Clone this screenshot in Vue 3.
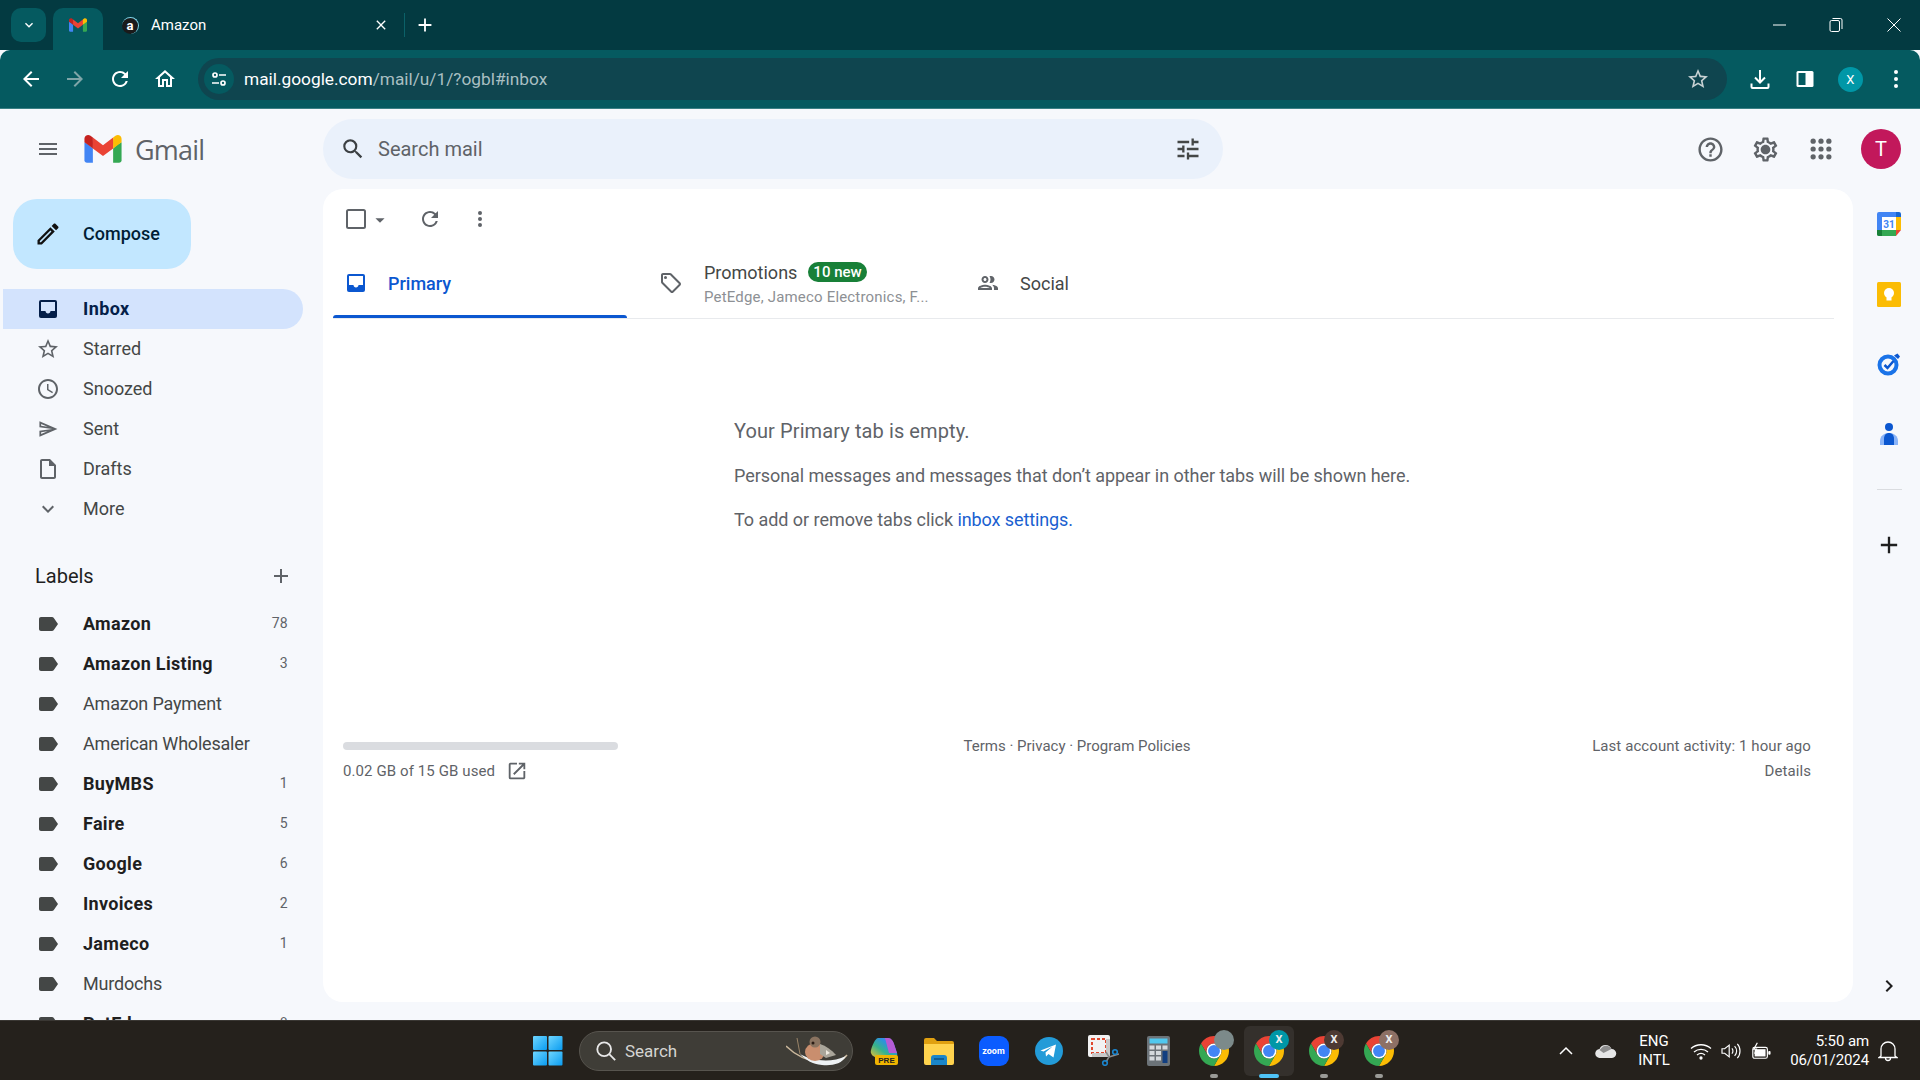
<template>
  <div class="screen">
    <!-- browser frame -->
    <div class="tabstrip">
      <button class="tab-list">
        <svg width="16" height="16" viewBox="0 0 24 24"><path fill="#fff" d="M16.59 8.59L12 13.17 7.41 8.59 6 10l6 6 6-6z" /></svg>
      </button>
      <div class="tab-pinned">
        <svg width="18" height="14" viewBox="0 0 256 193"><path v-for="p in gmailPaths" :key="p.d" :fill="p.fill" :d="p.d" /></svg>
      </div>
      <div class="tab-amazon">
        <span class="amazon-icon">a</span>
        <span class="tab-title">Amazon</span>
        <svg class="tab-close" width="16" height="16" viewBox="0 0 24 24"><path fill="#fff" d="M19 6.41L17.59 5 12 10.59 6.41 5 5 6.41 10.59 12 5 17.59 6.41 19 12 13.41 17.59 19 19 17.59 13.41 12z" /></svg>
      </div>
      <span class="tab-sep"></span>
      <svg class="tab-new" width="22" height="22" viewBox="0 0 24 24"><path fill="#fff" d="M19 13h-6v6h-2v-6H5v-2h6V5h2v6h6v2z" /></svg>
      <div class="win-controls">
        <span class="win-btn"><svg width="14" height="14" viewBox="0 0 14 14"><path stroke="#fff" d="M0 7h13" /></svg></span>
        <span class="win-btn"><svg width="14" height="14" viewBox="0 0 14 14" fill="none" stroke="#fff"><rect x="1" y="2.5" width="9.5" height="11" rx="1.5" /><path d="M3.5 .5h8a1.5 1.5 0 0 1 1.5 1.5v9" /></svg></span>
        <span class="win-btn win-close"><svg width="14" height="14" viewBox="0 0 14 14"><path stroke="#fff" d="M.5 .5l13 13M13.5 .5l-13 13" /></svg></span>
      </div>
    </div>

    <div class="toolbar">
      <span class="tool-btn"><svg width="24" height="24" viewBox="0 0 24 24"><path fill="#fff" d="M20 11H7.83l5.59-5.59L12 4l-8 8 8 8 1.41-1.41L7.83 13H20v-2z" /></svg></span>
      <span class="tool-btn"><svg width="24" height="24" viewBox="0 0 24 24"><path fill="#7fa5a8" d="M4 11h12.17l-5.59-5.59L12 4l8 8-8 8-1.41-1.41L16.17 13H4v-2z" /></svg></span>
      <span class="tool-btn reload-btn"><svg width="24" height="24" viewBox="0 0 24 24"><path fill="#fff" :d="icons.refresh" /></svg></span>
      <span class="tool-btn home-btn"><svg width="24" height="24" viewBox="0 0 24 24"><path fill="#fff" d="M12 5.69l5 4.5V18h-2v-6H9v6H7v-7.81l5-4.5M12 3L2 12h3v8h6v-6h2v6h6v-8h3L12 3z" /></svg></span>
      <div class="address">
        <span class="site-info">
          <svg width="18" height="18" viewBox="0 0 18 18" fill="none" stroke="#fff" stroke-width="1.7"><circle cx="5" cy="5" r="2" /><path d="M9 5h7M2 13h7" /><circle cx="13" cy="13" r="2" /></svg>
        </span>
        <span class="url"><span class="url-host">mail.google.com</span>/mail/u/1/?ogbl#inbox</span>
        <svg class="url-star" width="24" height="24" viewBox="0 0 24 24"><path fill="#c8d2d4" :d="icons.star" /></svg>
      </div>
      <span class="tool-btn first-action"><svg width="24" height="24" viewBox="0 0 24 24" fill="none" stroke="#fff" stroke-width="2"><path d="M12 3v12M7 10.5l5 5 5-5" /><path d="M3.5 16.5V20a1 1 0 0 0 1 1h15a1 1 0 0 0 1-1v-3.5" /></svg></span>
      <span class="tool-btn"><svg width="20" height="20" viewBox="0 0 20 20"><rect x="1.5" y="2" width="17" height="16" rx="1.5" fill="#fff" /><rect x="3.5" y="4" width="7" height="12" fill="#055a60" /></svg></span>
      <span class="tool-btn"><span class="profile">X</span></span>
      <span class="tool-btn"><svg width="20" height="24" viewBox="0 0 20 24" fill="#fff"><circle cx="10" cy="5" r="2" /><circle cx="10" cy="12" r="2" /><circle cx="10" cy="19" r="2" /></svg></span>
    </div>

    <!-- gmail -->
    <div class="page">
      <header class="gm-header">
        <div class="brand">
          <svg class="hamburger" width="24" height="24" viewBox="0 0 24 24"><path fill="#5f6368" d="M3 18h18v-2H3v2zm0-5h18v-2H3v2zm0-7v2h18V6H3z" /></svg>
          <svg width="38" height="28" viewBox="0 0 256 193"><path v-for="p in gmailPaths" :key="p.d" :fill="p.fill" :d="p.d" /></svg>
          <span class="gmail-word">Gmail</span>
        </div>
        <div class="search">
          <svg width="26" height="26" viewBox="0 0 24 24"><path fill="#3c4043" d="M15.5 14h-.79l-.28-.27A6.471 6.471 0 0 0 16 9.5 6.5 6.5 0 1 0 9.5 16c1.61 0 3.09-.59 4.23-1.57l.27.28v.79l5 4.99L20.49 19l-4.99-5zm-6 0C7.01 14 5 11.99 5 9.5S7.01 5 9.5 5 14 7.01 14 9.5 11.99 14 9.5 14z" /></svg>
          <span class="search-text">Search mail</span>
          <svg class="search-tune" width="28" height="28" viewBox="0 0 24 24"><path fill="#444746" d="M3 17v2h6v-2H3zM3 5v2h10V5H3zm10 16v-2h8v-2h-8v-2h-2v6h2zM7 9v2H3v2h4v2h2V9H7zm14 4v-2H11v2h10zm-6-4h2V7h4V5h-4V3h-2v6z" /></svg>
        </div>
        <div class="head-actions">
          <span class="head-btn"><svg width="29" height="29" viewBox="0 0 24 24"><path fill="#5f6368" d="M11 18h2v-2h-2v2zm1-16C6.48 2 2 6.48 2 12s4.48 10 10 10 10-4.48 10-10S17.52 2 12 2zm0 18c-4.41 0-8-3.59-8-8s3.59-8 8-8 8 3.59 8 8-3.59 8-8 8zm0-14c-2.21 0-4 1.79-4 4h2c0-1.1.9-2 2-2s2 .9 2 2c0 2-3 1.75-3 5h2c0-2.25 3-2.5 3-5 0-2.21-1.79-4-4-4z" /></svg></span>
          <span class="head-btn"><svg width="29" height="29" viewBox="0 0 24 24"><path fill="#5f6368" d="M19.43 12.98c.04-.32.07-.64.07-.98 0-.34-.03-.66-.07-.98l2.11-1.65c.19-.15.24-.42.12-.64l-2-3.46c-.09-.16-.26-.25-.44-.25-.06 0-.12.01-.17.03l-2.49 1c-.52-.4-1.08-.73-1.69-.98l-.38-2.65C14.46 2.18 14.25 2 14 2h-4c-.25 0-.46.18-.49.42l-.38 2.65c-.61.25-1.17.59-1.69.98l-2.49-1c-.06-.02-.12-.03-.18-.03-.17 0-.34.09-.43.25l-2 3.46c-.13.22-.07.49.12.64l2.11 1.65c-.04.32-.07.65-.07.98 0 .33.03.66.07.98l-2.11 1.65c-.19.15-.24.42-.12.64l2 3.46c.09.16.26.25.44.25.06 0 .12-.01.17-.03l2.49-1c.52.4 1.08.73 1.69.98l.38 2.65c.03.24.24.42.49.42h4c.25 0 .46-.18.49-.42l.38-2.65c.61-.25 1.17-.59 1.69-.98l2.49 1c.06.02.12.03.18.03.17 0 .34-.09.43-.25l2-3.46c.12-.22.07-.49-.12-.64l-2.11-1.65zm-1.98-1.71c.04.31.05.52.05.73 0 .21-.02.43-.05.73l-.14 1.13.89.7 1.08.84-.7 1.21-1.27-.51-1.04-.42-.9.68c-.43.32-.84.56-1.25.73l-1.06.43-.16 1.13-.2 1.35h-1.4l-.19-1.35-.16-1.13-1.06-.43c-.43-.18-.83-.41-1.23-.71l-.91-.7-1.06.43-1.27.51-.7-1.21 1.08-.84.89-.7-.14-1.13c-.03-.31-.05-.54-.05-.74s.02-.43.05-.73l.14-1.13-.89-.7-1.08-.84.7-1.21 1.27.51 1.04.42.9-.68c.43-.32.84-.56 1.25-.73l1.06-.43.16-1.13.2-1.35h1.39l.19 1.35.16 1.13 1.06.43c.43.18.83.41 1.23.71l.91.7 1.06-.43 1.27-.51.7 1.21-1.07.85-.89.7.14 1.13zM12 8c-2.21 0-4 1.79-4 4s1.79 4 4 4 4-1.79 4-4-1.79-4-4-4z" /></svg></span>
          <span class="head-btn"><svg width="22" height="22" viewBox="0 0 21 21" fill="#5f6368"><template v-for="y in [3, 10.5, 18]" :key="y"><circle v-for="x in [3, 10.5, 18]" :key="x" :cx="x" :cy="y" r="2.5" /></template></svg></span>
          <span class="avatar">T</span>
        </div>
      </header>

      <div class="gm-body">
        <aside class="sidebar">
          <button class="compose">
            <svg width="28" height="28" viewBox="0 0 24 24"><path fill="#111" d="M14.06 9.02l.92.92L5.92 19H5v-.92l9.06-9.06M17.66 3c-.25 0-.51.1-.7.29l-1.83 1.83 3.75 3.75 1.83-1.83a.996.996 0 0 0 0-1.41l-2.34-2.34c-.2-.2-.45-.29-.71-.29zm-3.6 3.19L3 17.25V21h3.75L17.81 9.94l-3.75-3.75z" /></svg>
            <span>Compose</span>
          </button>

          <nav class="nav">
            <div v-for="item in navItems" :key="item.name" class="nav-row" :class="{ active: item.active }">
              <svg v-if="item.active" width="24" height="24" viewBox="0 0 24 24"><rect x="3" y="3" width="18" height="18" rx="2" fill="#041e49" /><path fill="#d3e3fd" d="M5 5h14v9h-4.5c0 1.4-1.1 2.5-2.5 2.5s-2.5-1.1-2.5-2.5H5z" /></svg>
              <svg v-else width="24" height="24" :viewBox="item.box || '0 0 24 24'"><path fill="#5f6368" :d="item.icon" /><path v-if="item.icon2" fill="#5f6368" :d="item.icon2" /></svg>
              <span class="nav-name">{{ item.name }}</span>
            </div>
          </nav>

          <div class="labels-head">
            <span>Labels</span>
            <svg width="24" height="24" viewBox="0 0 24 24"><path fill="#5f6368" d="M19 13h-6v6h-2v-6H5v-2h6V5h2v6h6v2z" /></svg>
          </div>

          <div class="labels">
            <div v-for="label in labels" :key="label.name" class="nav-row label-row" :class="{ unread: label.count }">
              <svg width="24" height="24" viewBox="0 0 24 24"><path fill="#444746" :d="icons.label" /></svg>
              <span class="nav-name">{{ label.name }}</span>
              <span class="count">{{ label.count }}</span>
            </div>
          </div>
        </aside>

        <main class="card">
          <div class="mail-tools">
            <svg width="24" height="24" viewBox="0 0 24 24"><rect x="3" y="3" width="18" height="18" rx="1.5" fill="none" stroke="#5f6368" stroke-width="2" /></svg>
            <svg class="caret" width="22" height="22" viewBox="0 0 24 24"><path fill="#5f6368" d="M7 10l5 5 5-5z" /></svg>
            <svg class="tool-refresh" width="24" height="24" viewBox="0 0 24 24"><path fill="#5f6368" :d="icons.refresh" /></svg>
            <svg class="tool-more" width="24" height="24" viewBox="0 0 24 24" fill="#5f6368"><circle cx="12" cy="6" r="2" /><circle cx="12" cy="12" r="2" /><circle cx="12" cy="18" r="2" /></svg>
          </div>

          <div class="tabs">
            <div class="tab tab-primary">
              <svg width="24" height="24" viewBox="0 0 24 24"><rect x="3" y="3" width="18" height="18" rx="2" fill="#0b57d0" /><path fill="#fff" d="M5 5h14v9h-4.5c0 1.4-1.1 2.5-2.5 2.5s-2.5-1.1-2.5-2.5H5z" /></svg>
              <span>Primary</span>
            </div>
            <div class="tab tab-promos">
              <svg width="24" height="24" viewBox="0 0 24 24"><path fill="#5f6368" d="M21.41 11.58l-9-9C12.05 2.22 11.55 2 11 2H4c-1.1 0-2 .9-2 2v7c0 .55.22 1.05.59 1.42l9 9c.36.36.86.58 1.41.58.55 0 1.05-.22 1.41-.59l7-7c.37-.36.59-.86.59-1.41 0-.55-.23-1.06-.59-1.42zM13 20.01L4 11V4h7v-.01l9 9-7 7.02z" /><circle cx="6.5" cy="6.5" r="1.5" fill="#5f6368" /></svg>
              <div class="promo-text">
                <div class="promo-title">Promotions <span class="new-badge">10 new</span></div>
                <div class="promo-sub">PetEdge, Jameco Electronics, F...</div>
              </div>
            </div>
            <div class="tab tab-social">
              <svg width="24" height="24" viewBox="0 0 24 24"><path fill="#5f6368" d="M9 13.75c-2.34 0-7 1.17-7 3.5V19h14v-1.75c0-2.33-4.66-3.5-7-3.5zM4.34 17c.84-.58 2.87-1.25 4.66-1.25s3.82.67 4.66 1.25H4.34zM9 12c1.93 0 3.5-1.57 3.5-3.5S10.93 5 9 5 5.5 6.57 5.5 8.5 7.07 12 9 12zm0-5c.83 0 1.5.67 1.5 1.5S9.83 10 9 10s-1.5-.67-1.5-1.5S8.17 7 9 7zm7.04 6.81c1.16.84 1.96 1.96 1.96 3.44V19h4v-1.75c0-2.02-3.5-3.17-5.96-3.44zM15 12c1.93 0 3.5-1.57 3.5-3.5S16.93 5 15 5c-.54 0-1.04.13-1.5.35.63.89 1 1.98 1 3.15s-.37 2.26-1 3.15c.46.22.96.35 1.5.35z" /></svg>
              <span>Social</span>
            </div>
          </div>

          <div class="empty">
            <div class="empty-title">Your Primary tab is empty.</div>
            <p>Personal messages and messages that don’t appear in other tabs will be shown here.</p>
            <p>To add or remove tabs click <a class="link">inbox settings</a><span class="link">.</span></p>
          </div>

          <footer class="mail-foot">
            <div class="storage">
              <div class="storage-bar"></div>
              <div class="storage-text">
                0.02 GB of 15 GB used
                <svg width="22" height="22" viewBox="0 0 24 24"><path fill="#5f6368" d="M19 19H5V5h7V3H5a2 2 0 0 0-2 2v14a2 2 0 0 0 2 2h14c1.1 0 2-.9 2-2v-7h-2v7zM14 3v2h3.59l-9.83 9.83 1.41 1.41L19 6.41V10h2V3h-7z" /></svg>
              </div>
            </div>
            <div class="terms">Terms · Privacy · Program Policies</div>
            <div class="activity">
              <div>Last account activity: 1 hour ago</div>
              <div class="details">Details</div>
            </div>
          </footer>
        </main>

        <aside class="rail">
          <span class="rail-btn">
            <svg width="24" height="24" viewBox="0 0 24 24"><path fill="#4285f4" d="M2 0h17v5H5v14H0V2a2 2 0 0 1 2-2z" /><path fill="#fbbc04" d="M19 5h5v13h-5z" /><path fill="#34a853" d="M5 18h14v6H2a2 2 0 0 1-2-2v-4z" /><path fill="#188038" d="M0 18h5v6H2a2 2 0 0 1-2-2z" /><path fill="#ea4335" d="M19 18h5l-5 6z" /><path fill="#1967d2" d="M19 0h3a2 2 0 0 1 2 2v3h-5z" /><rect x="5" y="5" width="14" height="13" fill="#fff" /><text x="12" y="15.5" text-anchor="middle" class="cal-num">31</text></svg>
          </span>
          <span class="rail-btn">
            <svg width="24" height="25" viewBox="0 0 24 25"><rect width="24" height="25" rx="1.5" fill="#fbbc04" /><circle cx="12" cy="11" r="5" fill="#fff" /><rect x="9.5" y="15" width="5" height="3.5" fill="#fff" /></svg>
          </span>
          <span class="rail-btn">
            <svg width="24" height="24" viewBox="0 0 24 24"><circle cx="11" cy="13" r="8.5" fill="none" stroke="#1a73e8" stroke-width="4" /><path d="M7.5 13l3 3 6-7" fill="none" stroke="#0b57d0" stroke-width="2.5" /><path d="M17 3.5l4 3.5 2-2.5-2.5-3z" fill="#0b57d0" /></svg>
          </span>
          <span class="rail-btn">
            <svg width="18" height="22" viewBox="0 0 18 22"><circle cx="9" cy="4" r="4" fill="#0b57d0" /><path d="M0 22v-4c0-5 4-8 9-8s9 3 9 8v4z" fill="#8ab4f8" /><path d="M4 22v-6c0-4 2-6 5-6s5 2 5 6v6z" fill="#0b57d0" /></svg>
          </span>
          <div class="rail-sep"></div>
          <span class="rail-btn">
            <svg width="28" height="28" viewBox="0 0 24 24"><path fill="#1f1f1f" d="M19 13h-6v6h-2v-6H5v-2h6V5h2v6h6v2z" /></svg>
          </span>
          <svg class="rail-chevron" width="24" height="24" viewBox="0 0 24 24"><path fill="#1f1f1f" d="M8.59 16.59L13.17 12 8.59 7.41 10 6l6 6-6 6z" /></svg>
        </aside>
      </div>
    </div>

    <!-- windows taskbar -->
    <div class="taskbar">
      <span class="start">
        <svg width="30" height="30" viewBox="0 0 30 30">
          <defs><linearGradient id="winBlue" x1="0" y1="0" x2="1" y2="1"><stop offset="0" stop-color="#6fd6ff" /><stop offset="1" stop-color="#0a9cf0" /></linearGradient></defs>
          <rect x="0" y="0" width="14" height="14" rx="1" fill="url(#winBlue)" />
          <rect x="15.5" y="0" width="14" height="14" rx="1" fill="url(#winBlue)" />
          <rect x="0" y="15.5" width="14" height="14" rx="1" fill="url(#winBlue)" />
          <rect x="15.5" y="15.5" width="14" height="14" rx="1" fill="url(#winBlue)" />
        </svg>
      </span>
      <div class="task-search">
        <svg width="22" height="22" viewBox="0 0 24 24" fill="none" stroke="#e8e8e8" stroke-width="2"><circle cx="10" cy="10" r="7.5" /><path d="M15.5 15.5L22 22" /></svg>
        <span>Search</span>
        <svg class="bird" width="62" height="30" viewBox="0 0 62 30">
          <path d="M0 10c8 8 20 15 36 17 10 1 20-1 25-8" fill="none" stroke="#cbb89c" stroke-width="1.5" />
          <path d="M14 18c10 6 30 10 46 2-4 8-14 10-24 9-10-1-16-5-22-11z" fill="#eef2f4" />
          <path d="M11 2l3 16" stroke="#9a8468" stroke-width="1" />
          <ellipse cx="29" cy="16" rx="10" ry="9" fill="#c98e6e" />
          <circle cx="29" cy="6" r="5.5" fill="#8a7360" />
          <circle cx="27" cy="7" r="1.5" fill="#2b1c14" />
          <path d="M34 8c6 2 12 6 16 11l-10 3-6-4z" fill="#a9a59a" />
          <path d="M40 14l4 3-4 2z" fill="#f0ece2" />
        </svg>
      </div>

      <span class="app">
        <svg width="30" height="30" viewBox="0 0 30 30">
          <defs><linearGradient id="copilotG" x1="0" y1="1" x2="1" y2="0"><stop offset="0" stop-color="#f2c230" /><stop offset=".4" stop-color="#35b38c" /><stop offset=".7" stop-color="#2e8fe6" /><stop offset="1" stop-color="#d85fd0" /></linearGradient></defs>
          <path d="M9 2h10c3 0 5 3 6 6l3 9c1 3-1 5-4 5H12c-4 0-9-1-10-5-1-3 4-15 7-15z" fill="url(#copilotG)" />
          <path d="M16 2h3c3 0 5 3 6 6l3 9h-8z" fill="#b55cd6" />
          <rect x="6" y="19" width="23" height="10" rx="2" fill="#f0b400" />
          <text x="17.5" y="27" text-anchor="middle" class="pre-text">PRE</text>
        </svg>
      </span>
      <span class="app">
        <svg width="30" height="28" viewBox="0 0 30 28"><path d="M0 3a2 2 0 0 1 2-2h8l3 3h15a2 2 0 0 1 2 2v2H0z" fill="#e0a010" /><path d="M0 7h30v19a2 2 0 0 1-2 2H2a2 2 0 0 1-2-2z" fill="#ffd34e" /><path d="M7 28v-7a3 3 0 0 1 3-3h10a3 3 0 0 1 3 3v7z" fill="#1b86c9" /><path d="M10 22h10" stroke="#0c4f80" stroke-width="1.5" /></svg>
      </span>
      <span class="app"><span class="zoom-icon">zoom</span></span>
      <span class="app">
        <svg width="28" height="28" viewBox="0 0 28 28"><circle cx="14" cy="14" r="14" fill="#239bd8" /><path d="M5.5 13.5L21 7.5l-2.5 13-5-3.5-2.5 2.5-.5-4 7-6-9 5z" fill="#fff" /></svg>
      </span>
      <span class="app">
        <svg width="31" height="31" viewBox="0 0 31 31"><rect x="0" y="0" width="22" height="22" rx="2" fill="#f2f2f2" /><rect x="4" y="4" width="14" height="14" fill="none" stroke="#e0492f" stroke-width="2" stroke-dasharray="3 2" /><path d="M18 4h4v18H4v-4h14z" fill="#c9c9c9" /><path d="M18 17l3 5-3 5M31 19l-10 3" fill="none" stroke="#8a8a8a" stroke-width="1.5" /><circle cx="17" cy="28" r="2.3" fill="none" stroke="#1a86d0" stroke-width="1.6" /><circle cx="27" cy="17" r="2.3" fill="none" stroke="#1a86d0" stroke-width="1.6" /></svg>
      </span>
      <span class="app">
        <svg width="23" height="30" viewBox="0 0 23 30"><rect width="23" height="30" rx="2" fill="#6c7378" /><rect x="2.5" y="2.5" width="18" height="5" fill="#50c8ee" /><g fill="#d5dadd"><rect x="2.5" y="9.5" width="5" height="4" /><rect x="9" y="9.5" width="5" height="4" /><rect x="15.5" y="9.5" width="5" height="4" /><rect x="2.5" y="15" width="5" height="4" /><rect x="9" y="15" width="5" height="4" /><rect x="2.5" y="20.5" width="5" height="4" /><rect x="9" y="20.5" width="5" height="4" /></g><rect x="15.5" y="15" width="5" height="12" fill="#123f80" /></svg>
      </span>
      <span v-for="win in chromeWindows" :key="win.id" class="app chrome-app" :class="{ current: win.current }">
        <svg width="30" height="30" viewBox="0 0 48 48">
          <path fill="#ea4335" d="M24 0C15.1 0 7.4 4.8 3.2 12l10.4 18A12 12 0 0 1 24 12h20.8C40.6 4.8 32.9 0 24 0z" />
          <path fill="#fbbc04" d="M44.8 12H24a12 12 0 0 1 10.4 18L24 48c13.3 0 24-10.7 24-24 0-4.4-1.2-8.5-3.2-12z" />
          <path fill="#34a853" d="M3.2 12C1.2 15.5 0 19.6 0 24c0 13.3 10.7 24 24 24l10.4-18A12 12 0 0 1 13.6 30L3.2 12z" />
          <circle cx="24" cy="24" r="12" fill="#fff" />
          <circle cx="24" cy="24" r="9.5" fill="#4285f4" />
        </svg>
        <span class="win-badge" :class="win.badge">{{ win.letter }}</span>
        <span class="win-pill"></span>
      </span>

      <div class="tray">
        <span class="tray-item tray-caret"><svg width="16" height="16" viewBox="0 0 16 16" fill="none" stroke="#fff" stroke-width="1.5"><path d="M2 11l6-6 6 6" /></svg></span>
        <span class="tray-item tray-cloud"><svg width="22" height="14" viewBox="0 0 22 14"><path d="M5 14a4.5 4.5 0 0 1-.5-9A6.5 6.5 0 0 1 16.5 5 4.5 4.5 0 0 1 17 14z" fill="#e6e6e6" /><path d="M8 2.5A6.5 6.5 0 0 1 16.5 5l-8 4-4-3z" fill="#8e8e8e" /></svg></span>
        <span class="tray-lang">ENG<br />INTL</span>
        <span class="tray-item tray-wifi"><svg width="22" height="18" viewBox="0 0 22 18" fill="none" stroke="#fff" stroke-width="1.3"><path d="M1 6.5c5.5-5 14.5-5 20 0M4 10c4-3.5 10-3.5 14 0M7 13c2.3-1.8 5.7-1.8 8 0" /><circle cx="11" cy="16" r="1" fill="#fff" /></svg></span>
        <span class="tray-item"><svg width="20" height="18" viewBox="0 0 22 20" fill="none" stroke="#fff" stroke-width="1.3"><path d="M1 7.5h3l5-4v13l-5-4H1z" /><path d="M12 7c1.5 1.5 1.5 4.5 0 6M15 4.500c3 3 3 8 0 11M18 2c4 4 4 12 0 16" /></svg></span>
        <span class="tray-item"><svg width="20" height="18" viewBox="0 0 22 18"><rect x="2" y="5" width="16" height="12" rx="2" fill="none" stroke="#fff" stroke-width="1.3" /><rect x="4" y="7" width="12" height="8" fill="#fff" /><rect x="19" y="9" width="2.5" height="4" rx="1" fill="#fff" /><path d="M7 0L3 7h3l-2 5" fill="none" stroke="#fff" stroke-width="1.3" /></svg></span>
        <span class="tray-clock"><span>5:50 am</span><span>06/01/2024</span></span>
        <span class="tray-item tray-bell"><svg width="20" height="22" viewBox="0 0 20 22" fill="none" stroke="#fff" stroke-width="1.3"><path d="M3 16V9a7 7 0 0 1 14 0v7l2 1.5H1zM7.5 18a2.5 2.5 0 0 0 5 0" /></svg></span>
      </div>
    </div>
  </div>
</template>

<script setup>
const icons = {
  refresh: 'M17.65 6.35A7.958 7.958 0 0 0 12 4c-4.42 0-7.99 3.58-7.99 8s3.57 8 7.99 8c3.73 0 6.84-2.55 7.73-6h-2.08A5.99 5.99 0 0 1 12 18c-3.31 0-6-2.69-6-6s2.69-6 6-6c1.66 0 3.14.69 4.22 1.78L13 11h7V4l-2.35 2.35z',
  star: 'M22 9.24l-7.19-.62L12 2 9.19 8.63 2 9.24l5.46 4.73L5.82 21 12 17.27 18.18 21l-1.63-7.03L22 9.24zM12 15.4l-3.76 2.27 1-4.28-3.32-2.88 4.38-.38L12 6.1l1.71 4.04 4.38.38-3.32 2.88 1 4.28L12 15.4z',
  label: 'M17.63 5.84C17.27 5.33 16.67 5 16 5L5 5.01C3.9 5.01 3 5.9 3 7v10c0 1.1.9 1.99 2 1.99L16 19c.67 0 1.27-.33 1.63-.84L22 12l-4.37-6.16z',
}

const gmailPaths = [
  { fill: '#4285f4', d: 'M58.182 192.05V93.14L27.507 65.077 0 49.504v125.091c0 9.658 7.825 17.455 17.455 17.455h40.727Z' },
  { fill: '#34a853', d: 'M197.818 192.05h40.727c9.659 0 17.455-7.826 17.455-17.455V49.505l-31.156 17.837-27.026 25.798v98.91Z' },
  { fill: '#ea4335', d: 'm58.182 93.14-4.174-38.647 4.174-36.989L128 69.868l69.818-52.364 4.669 34.992-4.669 40.644L128 145.504z' },
  { fill: '#fbbc04', d: 'M197.818 17.504V93.14L256 49.504V26.231c0-21.585-24.64-33.89-41.89-20.945l-16.292 12.218Z' },
  { fill: '#c5221f', d: 'm0 49.504 26.759 20.07L58.182 93.14V17.504L41.89 5.286C24.61-7.66 0 4.646 0 26.23v23.273Z' },
]

const navItems = [
  { name: 'Inbox', active: true },
  { name: 'Starred', icon: icons.star },
  {
    name: 'Snoozed',
    icon: 'M11.99 2C6.47 2 2 6.48 2 12s4.47 10 9.99 10C17.52 22 22 17.52 22 12S17.52 2 11.99 2zM12 20c-4.42 0-8-3.58-8-8s3.58-8 8-8 8 3.58 8 8-3.58 8-8 8z',
    icon2: 'M12.5 7H11v6l5.25 3.15.75-1.23-4.5-2.67z',
  },
  { name: 'Sent', box: '-2 -2 28 28', icon: 'M4.01 6.03l7.51 3.22-7.52-1 .01-2.22m7.5 8.72L4 17.97v-2.22l7.51-1M2.01 3L2 10l15 2-15 2 .01 7L23 12 2.01 3z' },
  { name: 'Drafts', icon: 'M14 2H6c-1.1 0-1.99.9-1.99 2L4 20c0 1.1.89 2 1.99 2H18c1.1 0 2-.9 2-2V8l-6-6zM6 20V4h7v5h5v11H6z' },
  { name: 'More', icon: 'M16.59 8.59L12 13.17 7.41 8.59 6 10l6 6 6-6z' },
]

const labels = [
  { name: 'Amazon', count: 78 },
  { name: 'Amazon Listing', count: 3 },
  { name: 'Amazon Payment' },
  { name: 'American Wholesaler' },
  { name: 'BuyMBS', count: 1 },
  { name: 'Faire', count: 5 },
  { name: 'Google', count: 6 },
  { name: 'Invoices', count: 2 },
  { name: 'Jameco', count: 1 },
  { name: 'Murdochs' },
  { name: 'PetEdge', count: 8 },
]

const chromeWindows = [
  { id: 1, letter: '', badge: 'badge-photo' },
  { id: 2, letter: 'X', badge: 'badge-teal', current: true },
  { id: 3, letter: 'X', badge: 'badge-brown' },
  { id: 4, letter: 'X', badge: 'badge-tan' },
]
</script>

<style>
html,
body {
  margin: 0;
  overflow: hidden;
}
</style>

<style scoped>
.screen {
  width: 1920px;
  height: 1080px;
  display: flex;
  flex-direction: column;
  overflow: hidden;
  font-family: Roboto, "Noto Sans", sans-serif;
  background: #f6f8fc;
}
svg {
  display: block;
  flex-shrink: 0;
}
button {
  border: 0;
  padding: 0;
  font-family: inherit;
}

/* tab strip */
.tabstrip {
  height: 50px;
  flex-shrink: 0;
  display: flex;
  align-items: flex-start;
  background: #033a41;
  color: #fff;
}
.tab-list {
  width: 35px;
  height: 34px;
  margin: 8px 0 0 11px;
  border-radius: 10px;
  background: #055a60;
  display: flex;
  align-items: center;
  justify-content: center;
}
.tab-pinned {
  width: 50px;
  height: 42px;
  margin: 8px 0 0 7px;
  border-radius: 10px 10px 0 0;
  background: #055a60;
  display: flex;
  align-items: center;
  justify-content: center;
  padding-bottom: 8px;
  box-sizing: border-box;
}
.tab-amazon {
  width: 291px;
  height: 34px;
  margin-top: 8px;
  padding: 0 5px 0 19px;
  box-sizing: border-box;
  display: flex;
  align-items: center;
  font-size: 15px;
}
.amazon-icon {
  width: 17px;
  height: 17px;
  border-radius: 50%;
  background: #1a1a1a;
  border-top: 1px solid #7fd3e8;
  border-right: 1px solid #7fd3e8;
  color: #fff;
  font-size: 13px;
  font-weight: 700;
  line-height: 15px;
  text-align: center;
  box-sizing: border-box;
}
.tab-title {
  margin-left: 12px;
}
.tab-close {
  margin-left: auto;
}
.tab-sep {
  width: 1px;
  height: 24px;
  margin: 13px 0 0 10px;
  background: #0b6168;
}
.tab-new {
  margin: 14px 0 0 9px;
}
.win-controls {
  margin-left: auto;
  display: flex;
}
.win-btn {
  width: 56px;
  height: 50px;
  display: flex;
  align-items: center;
  justify-content: center;
}
.win-close {
  width: 52px;
  margin-left: 4px;
}

/* toolbar */
.toolbar {
  height: 58px;
  flex-shrink: 0;
  display: flex;
  align-items: center;
  padding-left: 9px;
  background: #055a60;
  border-bottom: 1px solid #3a8085;
  border-radius: 10px 10px 0 0;
}
.tool-btn {
  width: 44px;
  height: 44px;
  display: flex;
  align-items: center;
  justify-content: center;
}
.reload-btn {
  width: 45px;
}
.home-btn {
  margin-left: 1px;
}
.first-action {
  margin-left: 11px;
}
.first-action ~ .tool-btn {
  width: 45.5px;
}
.address {
  width: 1529px;
  height: 42px;
  margin-left: 11px;
  border-radius: 21px;
  background: #0f454f;
  display: flex;
  align-items: center;
  padding: 0 17px 0 6px;
  box-sizing: border-box;
}
.site-info {
  width: 30px;
  height: 30px;
  border-radius: 50%;
  background: #055a60;
  display: flex;
  align-items: center;
  justify-content: center;
}
.url {
  margin-left: 10px;
  font-size: 17.3px;
  color: #a9bfc2;
}
.url-host {
  color: #fff;
}
.url-star {
  margin-left: auto;
}
.profile {
  width: 25px;
  height: 25px;
  border-radius: 50%;
  background: #0097a7;
  color: #fff;
  font-size: 13px;
  line-height: 25px;
  text-align: center;
}

/* gmail header */
.page {
  flex: 1;
  min-height: 0;
  display: flex;
  flex-direction: column;
}
.gm-header {
  height: 80px;
  flex-shrink: 0;
  display: flex;
  align-items: flex-start;
  padding-top: 10px;
  box-sizing: border-box;
}
.brand {
  width: 323px;
  height: 60px;
  flex-shrink: 0;
  display: flex;
  align-items: center;
}
.hamburger {
  margin: 0 24px 0 36px;
}
.gmail-word {
  margin-left: 13px;
  font-family: "Open Sans", sans-serif;
  font-size: 27px;
  letter-spacing: -0.8px;
  color: #5f6368;
}
.search {
  width: 900px;
  height: 60px;
  border-radius: 30px;
  background: #eaf1fb;
  display: flex;
  align-items: center;
  padding: 0 21px 0 17px;
  box-sizing: border-box;
}
.search-text {
  margin-left: 12px;
  font-size: 20px;
  color: #5f6368;
}
.search-tune {
  margin-left: auto;
}
.head-actions {
  margin-left: auto;
  height: 60px;
  padding-right: 19px;
  display: flex;
  align-items: center;
}
.head-btn {
  width: 55px;
  display: flex;
  justify-content: center;
}
.avatar {
  width: 40px;
  height: 40px;
  margin-left: 13px;
  border-radius: 50%;
  background: #c2185b;
  color: #fff;
  font-size: 20px;
  line-height: 40px;
  text-align: center;
}

/* sidebar */
.gm-body {
  flex: 1;
  min-height: 0;
  display: flex;
}
.sidebar {
  width: 323px;
  flex-shrink: 0;
  overflow: hidden;
}
.compose {
  width: 178px;
  height: 70px;
  margin: 10px 0 0 13px;
  border-radius: 24px;
  background: #c2e7ff;
  display: flex;
  align-items: center;
  padding-left: 21px;
  box-sizing: border-box;
  color: #001d35;
  font-size: 18px;
  font-weight: 500;
}
.compose span {
  margin: -1px 0 0 21px;
}
.nav {
  margin-top: 20px;
}
.nav .nav-name {
  margin-top: -1px;
}
.nav-row {
  width: 300px;
  height: 40px;
  margin-left: 3px;
  padding: 0 15px 0 33px;
  box-sizing: border-box;
  display: flex;
  align-items: center;
  font-size: 18px;
  color: #444746;
}
.nav-row.active {
  background: #d3e3fd;
  border-radius: 0 20px 20px 0;
  color: #041e49;
  font-weight: 700;
  letter-spacing: 0.4px;
}
.nav-name {
  margin-left: 23px;
}
.labels-head {
  width: 300px;
  height: 40px;
  margin: 27px 0 0 35px;
  padding-right: 42px;
  box-sizing: border-box;
  display: flex;
  align-items: center;
  justify-content: space-between;
  font-size: 20px;
  color: #1f1f1f;
}
.labels {
  margin-top: 7px;
}
.label-row {
  letter-spacing: -0.2px;
}
.label-row svg {
  margin-top: 1px;
}
.label-row.unread {
  font-weight: 700;
  color: #1f1f1f;
  letter-spacing: 0.3px;
}
.count {
  margin-left: auto;
  font-size: 14px;
  font-weight: 400;
  color: #5f6368;
}

/* main card */
.card {
  width: 1530px;
  flex-shrink: 0;
  margin-bottom: 18px;
  border-radius: 20px;
  background: #fff;
  display: flex;
  flex-direction: column;
  color: #5f6368;
}
.mail-tools {
  height: 71px;
  flex-shrink: 0;
  padding: 18px 0 0 21px;
  box-sizing: border-box;
  display: flex;
  align-items: flex-start;
}
.caret {
  margin: 2px 0 0 1px;
}
.tool-refresh {
  margin-left: 27px;
}
.tool-more {
  margin-left: 26px;
}
.tabs {
  height: 59px;
  flex-shrink: 0;
  margin: 0 19px 0 10px;
  border-bottom: 1px solid #e8eaed;
  box-sizing: border-box;
  display: flex;
}
.tab {
  position: relative;
  display: flex;
  align-items: center;
  padding-bottom: 12px;
  font-size: 18px;
  color: #444746;
  box-sizing: border-box;
}
.tab-primary {
  width: 294px;
  padding-left: 11px;
  gap: 20px;
  color: #0b57d0;
  font-weight: 500;
}
.tab-primary::after {
  content: "";
  position: absolute;
  left: 0;
  right: 0;
  bottom: 0;
  height: 3px;
  border-radius: 3px 3px 0 0;
  background: #0b57d0;
}
.tab-promos {
  width: 317px;
  padding-left: 32px;
  gap: 21px;
}
.tab-social {
  padding-left: 32px;
  gap: 20px;
}
.promo-title {
  display: flex;
  align-items: center;
  gap: 11px;
  height: 26px;
}
.new-badge {
  height: 20px;
  padding: 0 5px;
  border-radius: 10px;
  background: #188038;
  color: #fff;
  font-size: 15px;
  font-weight: 500;
  line-height: 20px;
}
.promo-sub {
  margin-top: 2px;
  font-size: 15px;
  line-height: 20px;
  letter-spacing: 0.18px;
  color: #8d9094;
}

.empty {
  margin: 98px 0 0 411px;
  color: #5f6368;
}
.empty-title {
  font-size: 20px;
  line-height: 28px;
  letter-spacing: 0.1px;
}
.empty p {
  margin: 18px 0 0;
  font-size: 18px;
  line-height: 26px;
  letter-spacing: -0.045px;
}
.link {
  color: #1a5fd0;
  letter-spacing: -0.1px;
}
.mail-foot {
  margin-top: 203px;
  padding: 0 42px 0 20px;
  display: grid;
  grid-template-columns: 1fr auto 1fr;
  font-size: 15px;
  line-height: 20px;
}
.storage-bar {
  width: 275px;
  height: 8px;
  margin-top: 6px;
  border-radius: 4px;
  background: #dadce0;
}
.storage-text {
  margin-top: 10px;
  display: flex;
  align-items: center;
  gap: 11px;
  letter-spacing: 0.1px;
}
.activity {
  text-align: right;
  letter-spacing: 0.08px;
}
.details {
  margin-top: 5px;
}

/* side rail */
.rail {
  flex: 1;
  padding: 0 0 22px 5px;
  box-sizing: border-box;
  display: flex;
  flex-direction: column;
  align-items: center;
}
.rail-btn {
  height: 70px;
  flex-shrink: 0;
  display: flex;
  align-items: center;
  justify-content: center;
}
.cal-num {
  font-family: Roboto, sans-serif;
  font-size: 10px;
  font-weight: 700;
  fill: #4285f4;
}
.rail-sep {
  width: 25px;
  height: 1px;
  margin: 20px 0 20px;
  background: #dadce0;
}
.rail-chevron {
  margin-top: auto;
}

/* taskbar */
.taskbar {
  height: 60px;
  flex-shrink: 0;
  display: flex;
  align-items: center;
  background: #25211c;
  border-top: 1px solid #3a3733;
  box-sizing: border-box;
  padding-left: 520px;
}
.start {
  width: 55px;
  display: flex;
  justify-content: center;
}
.task-search {
  width: 274px;
  height: 40px;
  margin: 0 3px 0 4px;
  padding: 0 4px 0 15px;
  box-sizing: border-box;
  border-radius: 20px;
  border: 1px solid #57544e;
  background: #3f3d37;
  display: flex;
  align-items: center;
  gap: 8px;
  color: #d5d5d2;
  font-size: 17px;
}
.bird {
  margin-left: auto;
}
.pre-text {
  font-family: "Liberation Sans", sans-serif;
  font-size: 8px;
  font-weight: 700;
  fill: #222;
}
.app {
  position: relative;
  width: 55px;
  height: 50px;
  display: flex;
  align-items: center;
  justify-content: center;
}
.zoom-icon {
  width: 30px;
  height: 30px;
  border-radius: 9px;
  background: #0b5cff;
  color: #fff;
  font-size: 9px;
  font-weight: 700;
  line-height: 30px;
  text-align: center;
}
.chrome-app.current::before {
  content: "";
  position: absolute;
  inset: 0 2.5px;
  border-radius: 6px;
  background: #34302c;
}
.chrome-app svg {
  position: relative;
}
.win-badge {
  position: absolute;
  left: 28px;
  top: 4px;
  width: 20px;
  height: 20px;
  border-radius: 50%;
  color: #eee;
  font-size: 11px;
  font-weight: 700;
  line-height: 20px;
  text-align: center;
}
.badge-photo {
  background: #7c8a8a;
}
.badge-teal {
  background: #0097a7;
}
.badge-brown {
  background: #4e3a33;
}
.badge-tan {
  background: #8d7065;
}
.win-pill {
  position: absolute;
  left: 50%;
  bottom: -2px;
  width: 8px;
  height: 4px;
  margin-left: -4px;
  border-radius: 2px;
  background: #9a9a96;
}
.chrome-app.current .win-pill {
  width: 20px;
  margin-left: -10px;
  background: #4fc3f7;
}

.tray {
  margin-left: auto;
  padding-right: 13px;
  display: flex;
  align-items: center;
  color: #fff;
  font-size: 15px;
  line-height: 19px;
}
.tray-item {
  width: 30px;
  display: flex;
  justify-content: center;
}
.tray-cloud {
  width: 50px;
}
.tray-lang {
  width: 46px;
  text-align: center;
}
.tray-wifi {
  margin-left: 9px;
}
.tray-clock {
  width: 93px;
  display: flex;
  flex-direction: column;
  align-items: flex-end;
  letter-spacing: -0.1px;
}
.tray-bell {
  width: 38px;
}
</style>
